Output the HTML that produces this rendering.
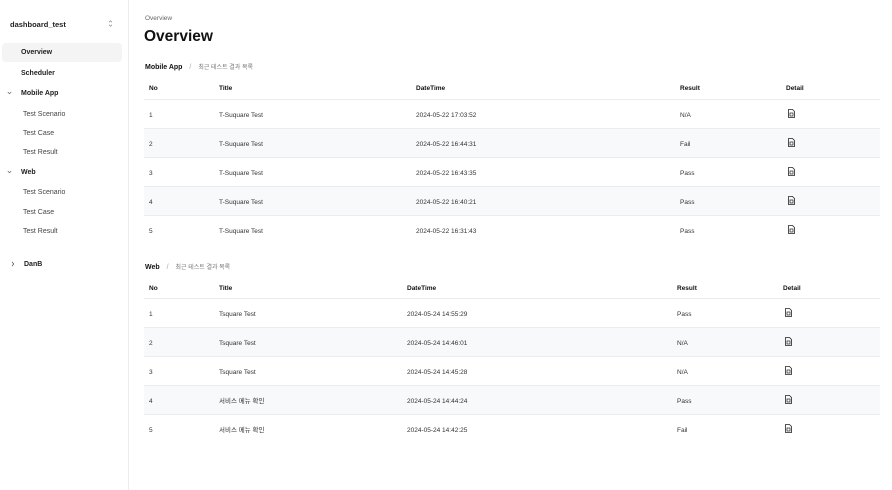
<!DOCTYPE html>
<html><head><meta charset="utf-8"><style>
*{margin:0;padding:0;box-sizing:border-box}
body{width:892px;height:490px;background:#fff;font-family:"Liberation Sans","Noto Sans CJK KR",sans-serif;color:#111;position:relative;overflow:hidden}
.a{position:absolute;white-space:nowrap}
.side{position:absolute;left:0;top:0;width:129px;height:490px;border-right:1px solid #ececec}
.si{position:absolute;font-size:7px;color:#222;line-height:9px}
.sb{font-weight:bold}
.sub{color:#444;left:23px}
.tbl{position:absolute;left:144px;width:736px}
.hd,.rw{position:absolute;left:0;width:736px;font-size:6.5px;line-height:8px}
.hd{font-weight:bold;height:24px;border-bottom:1px solid #ececec}
.rw{height:29px;border-bottom:1px solid #ececec;color:#333}
.rw.g{background:#f8f9fa}
.hd span{position:absolute;top:9px}
.rw span{position:absolute;top:12px}
.ic{position:absolute;width:7px;height:9px;top:9px}
</style></head><body>
<div class="side">
<div class="si sb" style="left:10px;top:20px;font-size:7.5px">dashboard_test</div>
<svg style="position:absolute;left:108px;top:19px" width="5" height="9" viewBox="0 0 5 9"><path d="M1 3.2L2.5 1.7 4 3.2M1 5.8L2.5 7.3 4 5.8" fill="none" stroke="#888" stroke-width=".7"/></svg>
<div style="position:absolute;left:2px;top:43px;width:120px;height:19px;background:#f4f4f5;border-radius:4px"></div>
<div class="si sb" style="left:21px;top:48px">Overview</div>
<div class="si sb" style="left:21px;top:69px">Scheduler</div>
<svg style="position:absolute;left:7px;top:91px" width="5" height="4" viewBox="0 0 5 4"><path d="M.8 1L2.5 2.7 4.2 1" fill="none" stroke="#666" stroke-width=".7"/></svg>
<div class="si sb" style="left:21px;top:89px">Mobile App</div>
<div class="si sub" style="top:110px">Test Scenario</div>
<div class="si sub" style="top:129px">Test Case</div>
<div class="si sub" style="top:148px">Test Result</div>
<svg style="position:absolute;left:7px;top:170px" width="5" height="4" viewBox="0 0 5 4"><path d="M.8 1L2.5 2.7 4.2 1" fill="none" stroke="#666" stroke-width=".7"/></svg>
<div class="si sb" style="left:21px;top:168px">Web</div>
<div class="si sub" style="top:188px">Test Scenario</div>
<div class="si sub" style="top:208px">Test Case</div>
<div class="si sub" style="top:227px">Test Result</div>
<svg style="position:absolute;left:11px;top:261px" width="4" height="6" viewBox="0 0 4 6"><path d="M1 .8L2.7 3 1 5.2" fill="none" stroke="#444" stroke-width=".7"/></svg>
<div class="si sb" style="left:24px;top:260px">DanB</div>
</div>

<div class="a" style="left:145px;top:15px;font-size:6.5px;color:#666">Overview</div>
<div class="a" style="left:144px;top:28px;font-size:15.5px;font-weight:bold">Overview</div>

<div class="a" style="left:145px;top:62px;font-size:7px"><b>Mobile App</b> <span style="color:#aaa;margin:0 5px">/</span> <span style="color:#777;font-size:6px">최근 테스트 결과 목록</span></div>
<div class="tbl" style="top:76px">
<div class="hd" style="top:0"><span style="left:5px">No</span><span style="left:75px">Title</span><span style="left:272px">DateTime</span><span style="left:536px">Result</span><span style="left:642px">Detail</span></div>
<div class="rw" style="top:24px"><span style="left:5px">1</span><span style="left:75px">T-Suquare Test</span><span style="left:272px">2024-05-22 17:03:52</span><span style="left:536px">N/A</span><svg class="ic" style="left:644px" viewBox="0 0 7 9"><path d="M.5.5h4l2 2v6h-6z" fill="none" stroke="#222" stroke-width=".8"/><rect x="2" y="4" width="3" height="3" fill="none" stroke="#222" stroke-width=".7"/></svg></div>
<div class="rw g" style="top:53px"><span style="left:5px">2</span><span style="left:75px">T-Suquare Test</span><span style="left:272px">2024-05-22 16:44:31</span><span style="left:536px">Fail</span><svg class="ic" style="left:644px" viewBox="0 0 7 9"><path d="M.5.5h4l2 2v6h-6z" fill="none" stroke="#222" stroke-width=".8"/><rect x="2" y="4" width="3" height="3" fill="none" stroke="#222" stroke-width=".7"/></svg></div>
<div class="rw" style="top:82px"><span style="left:5px">3</span><span style="left:75px">T-Suquare Test</span><span style="left:272px">2024-05-22 16:43:35</span><span style="left:536px">Pass</span><svg class="ic" style="left:644px" viewBox="0 0 7 9"><path d="M.5.5h4l2 2v6h-6z" fill="none" stroke="#222" stroke-width=".8"/><rect x="2" y="4" width="3" height="3" fill="none" stroke="#222" stroke-width=".7"/></svg></div>
<div class="rw g" style="top:111px"><span style="left:5px">4</span><span style="left:75px">T-Suquare Test</span><span style="left:272px">2024-05-22 16:40:21</span><span style="left:536px">Pass</span><svg class="ic" style="left:644px" viewBox="0 0 7 9"><path d="M.5.5h4l2 2v6h-6z" fill="none" stroke="#222" stroke-width=".8"/><rect x="2" y="4" width="3" height="3" fill="none" stroke="#222" stroke-width=".7"/></svg></div>
<div class="rw" style="top:140px;border-bottom:none"><span style="left:5px">5</span><span style="left:75px">T-Suquare Test</span><span style="left:272px">2024-05-22 16:31:43</span><span style="left:536px">Pass</span><svg class="ic" style="left:644px" viewBox="0 0 7 9"><path d="M.5.5h4l2 2v6h-6z" fill="none" stroke="#222" stroke-width=".8"/><rect x="2" y="4" width="3" height="3" fill="none" stroke="#222" stroke-width=".7"/></svg></div>
</div>

<div class="a" style="left:145px;top:262px;font-size:7px"><b>Web</b> <span style="color:#aaa;margin:0 5px">/</span> <span style="color:#777;font-size:6px">최근 테스트 결과 목록</span></div>
<div class="tbl" style="top:276px">
<div class="hd" style="top:0;height:23px"><span style="left:5px">No</span><span style="left:75px">Title</span><span style="left:263px">DateTime</span><span style="left:533px">Result</span><span style="left:639px">Detail</span></div>
<div class="rw" style="top:23px"><span style="left:5px">1</span><span style="left:75px">Tsquare Test</span><span style="left:263px">2024-05-24 14:55:29</span><span style="left:533px">Pass</span><svg class="ic" style="left:641px" viewBox="0 0 7 9"><path d="M.5.5h4l2 2v6h-6z" fill="none" stroke="#222" stroke-width=".8"/><rect x="2" y="4" width="3" height="3" fill="none" stroke="#222" stroke-width=".7"/></svg></div>
<div class="rw g" style="top:52px"><span style="left:5px">2</span><span style="left:75px">Tsquare Test</span><span style="left:263px">2024-05-24 14:46:01</span><span style="left:533px">N/A</span><svg class="ic" style="left:641px" viewBox="0 0 7 9"><path d="M.5.5h4l2 2v6h-6z" fill="none" stroke="#222" stroke-width=".8"/><rect x="2" y="4" width="3" height="3" fill="none" stroke="#222" stroke-width=".7"/></svg></div>
<div class="rw" style="top:81px"><span style="left:5px">3</span><span style="left:75px">Tsquare Test</span><span style="left:263px">2024-05-24 14:45:28</span><span style="left:533px">N/A</span><svg class="ic" style="left:641px" viewBox="0 0 7 9"><path d="M.5.5h4l2 2v6h-6z" fill="none" stroke="#222" stroke-width=".8"/><rect x="2" y="4" width="3" height="3" fill="none" stroke="#222" stroke-width=".7"/></svg></div>
<div class="rw g" style="top:110px"><span style="left:5px">4</span><span style="left:75px">서비스 메뉴 확인</span><span style="left:263px">2024-05-24 14:44:24</span><span style="left:533px">Pass</span><svg class="ic" style="left:641px" viewBox="0 0 7 9"><path d="M.5.5h4l2 2v6h-6z" fill="none" stroke="#222" stroke-width=".8"/><rect x="2" y="4" width="3" height="3" fill="none" stroke="#222" stroke-width=".7"/></svg></div>
<div class="rw" style="top:139px;border-bottom:none"><span style="left:5px">5</span><span style="left:75px">서비스 메뉴 확인</span><span style="left:263px">2024-05-24 14:42:25</span><span style="left:533px">Fail</span><svg class="ic" style="left:641px" viewBox="0 0 7 9"><path d="M.5.5h4l2 2v6h-6z" fill="none" stroke="#222" stroke-width=".8"/><rect x="2" y="4" width="3" height="3" fill="none" stroke="#222" stroke-width=".7"/></svg></div>
</div>
</body></html>
